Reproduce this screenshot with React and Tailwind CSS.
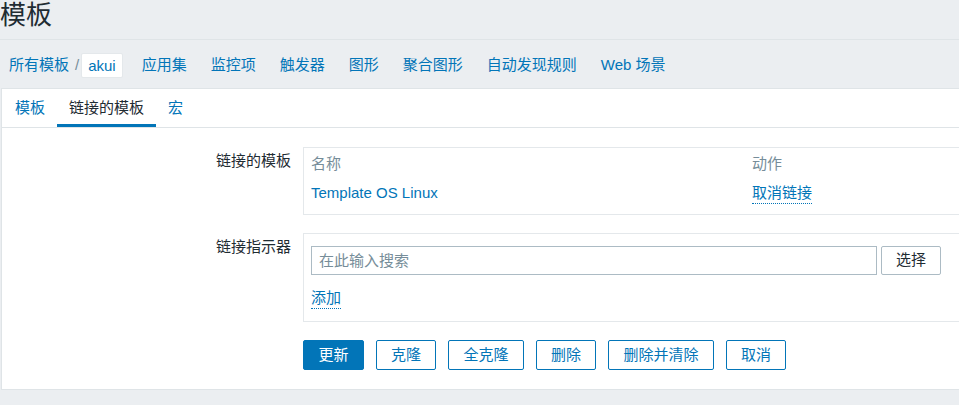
const navItems = ['应用集', '监控项', '触发器', '图形', '聚合图形', '自动发现规则', 'Web 场景'];

const tabs = [
  { label: '模板', active: false },
  { label: '链接的模板', active: true },
  { label: '宏', active: false },
];

const actions = [
  { label: '更新', w: 'w-[61px]', primary: true },
  { label: '克隆', w: 'w-[60px]' },
  { label: '全克隆', w: 'w-[76px]' },
  { label: '删除', w: 'w-[60px]' },
  { label: '删除并清除', w: 'w-[106px]' },
  { label: '取消', w: 'w-[60px]' },
];

const App = () => {
  return (
    <div
      className="w-[959px] h-[405px] overflow-hidden bg-[#ebeef1] text-[#1f2c33] text-[15px]"
      style={{ fontFamily: '"Liberation Sans", Arial, "Noto Sans CJK SC", sans-serif' }}
    >
      <div className="min-w-[1100px]">

        {/* Header */}
        <div className="h-[40px] border-b border-[#dfe4e7]">
          <h1 className="text-[26px] leading-[30px] font-normal">模板</h1>
        </div>

        {/* Navigation */}
        <div className="h-[48px] pt-[2px] flex items-center pl-[9px] text-[#0275b8]">
          <span>所有模板</span>
          <span className="text-[#768d99] ml-[6px] mr-[2px]">/</span>
          <span className="bg-white rounded-[2px] border border-[#e4e8eb] h-[25px] leading-[23px] px-[6px]">akui</span>
          <div className="flex ml-[7px]">
            {navItems.map((item) => (
              <span key={item} className="px-[12px]">{item}</span>
            ))}
          </div>
        </div>

        {/* Panel */}
        <div className="ml-[1px] bg-white border border-[#dfe4e7]">

          {/* Tabs */}
          <div className="flex pl-[1px] border-b border-[#dfe4e7]">
            {tabs.map((tab) => (
              <div
                key={tab.label}
                className={`h-[38px] pt-[4px] px-[12px] flex items-center border-b-[3px] ${tab.active
                    ? 'border-[#0275b8] text-[#1f2c33]'
                    : 'border-transparent text-[#0275b8]'
                  }`}
              >
                {tab.label}
              </div>
            ))}
          </div>

          {/* Form */}
          <div className="pt-[19px] pb-[19px]">

            {/* Linked templates */}
            <div className="flex items-start gap-[12px]">
              <label className="w-[289px] text-right leading-[28px]">链接的模板</label>
              <div className="w-[720px] border border-[#e4e8eb] px-[7px] pt-[2px] pb-[6px]">
                <div className="flex h-[29px] items-center text-[#768d99]">
                  <span className="w-[441px]">名称</span>
                  <span>动作</span>
                </div>
                <div className="flex h-[29px] items-center text-[#0275b8]">
                  <span className="w-[441px]">Template OS Linux</span>
                  <span className="border-b border-dotted border-[#0275b8] leading-[20px]">取消链接</span>
                </div>
              </div>
            </div>

            {/* Link new */}
            <div className="flex items-start gap-[12px] mt-[18px]">
              <label className="w-[289px] text-right leading-[28px]">链接指示器</label>
              <div className="w-[720px] border border-[#e4e8eb] px-[7px] pt-[12px] pb-[8px]">
                <div className="flex gap-[4px]">
                  <input
                    type="text"
                    placeholder="在此输入搜索"
                    className="w-[566px] h-[29px] border border-[#acbbc4] px-[7px] text-[15px] placeholder-[#768d99] focus:outline-none"
                  />
                  <button className="w-[60px] h-[29px] border border-[#acbbc4] rounded-[2px] bg-white text-[#1f2c33]">
                    选择
                  </button>
                </div>
                <div className="h-[30px] mt-[8px] flex items-center">
                  <span className="text-[#0275b8] border-b border-dotted border-[#0275b8] leading-[20px]">添加</span>
                </div>
              </div>
            </div>

            {/* Buttons */}
            <div className="flex gap-[12px] mt-[18px] ml-[301px]">
              {actions.map((a) => (
                <button
                  key={a.label}
                  className={`${a.w} h-[30px] rounded-[2px] border border-[#0275b8] ${a.primary
                      ? 'bg-[#0275b8] text-white'
                      : 'bg-white text-[#0275b8]'
                    }`}
                >
                  {a.label}
                </button>
              ))}
            </div>

          </div>
        </div>

      </div>
    </div>
  );
};

export default App;
